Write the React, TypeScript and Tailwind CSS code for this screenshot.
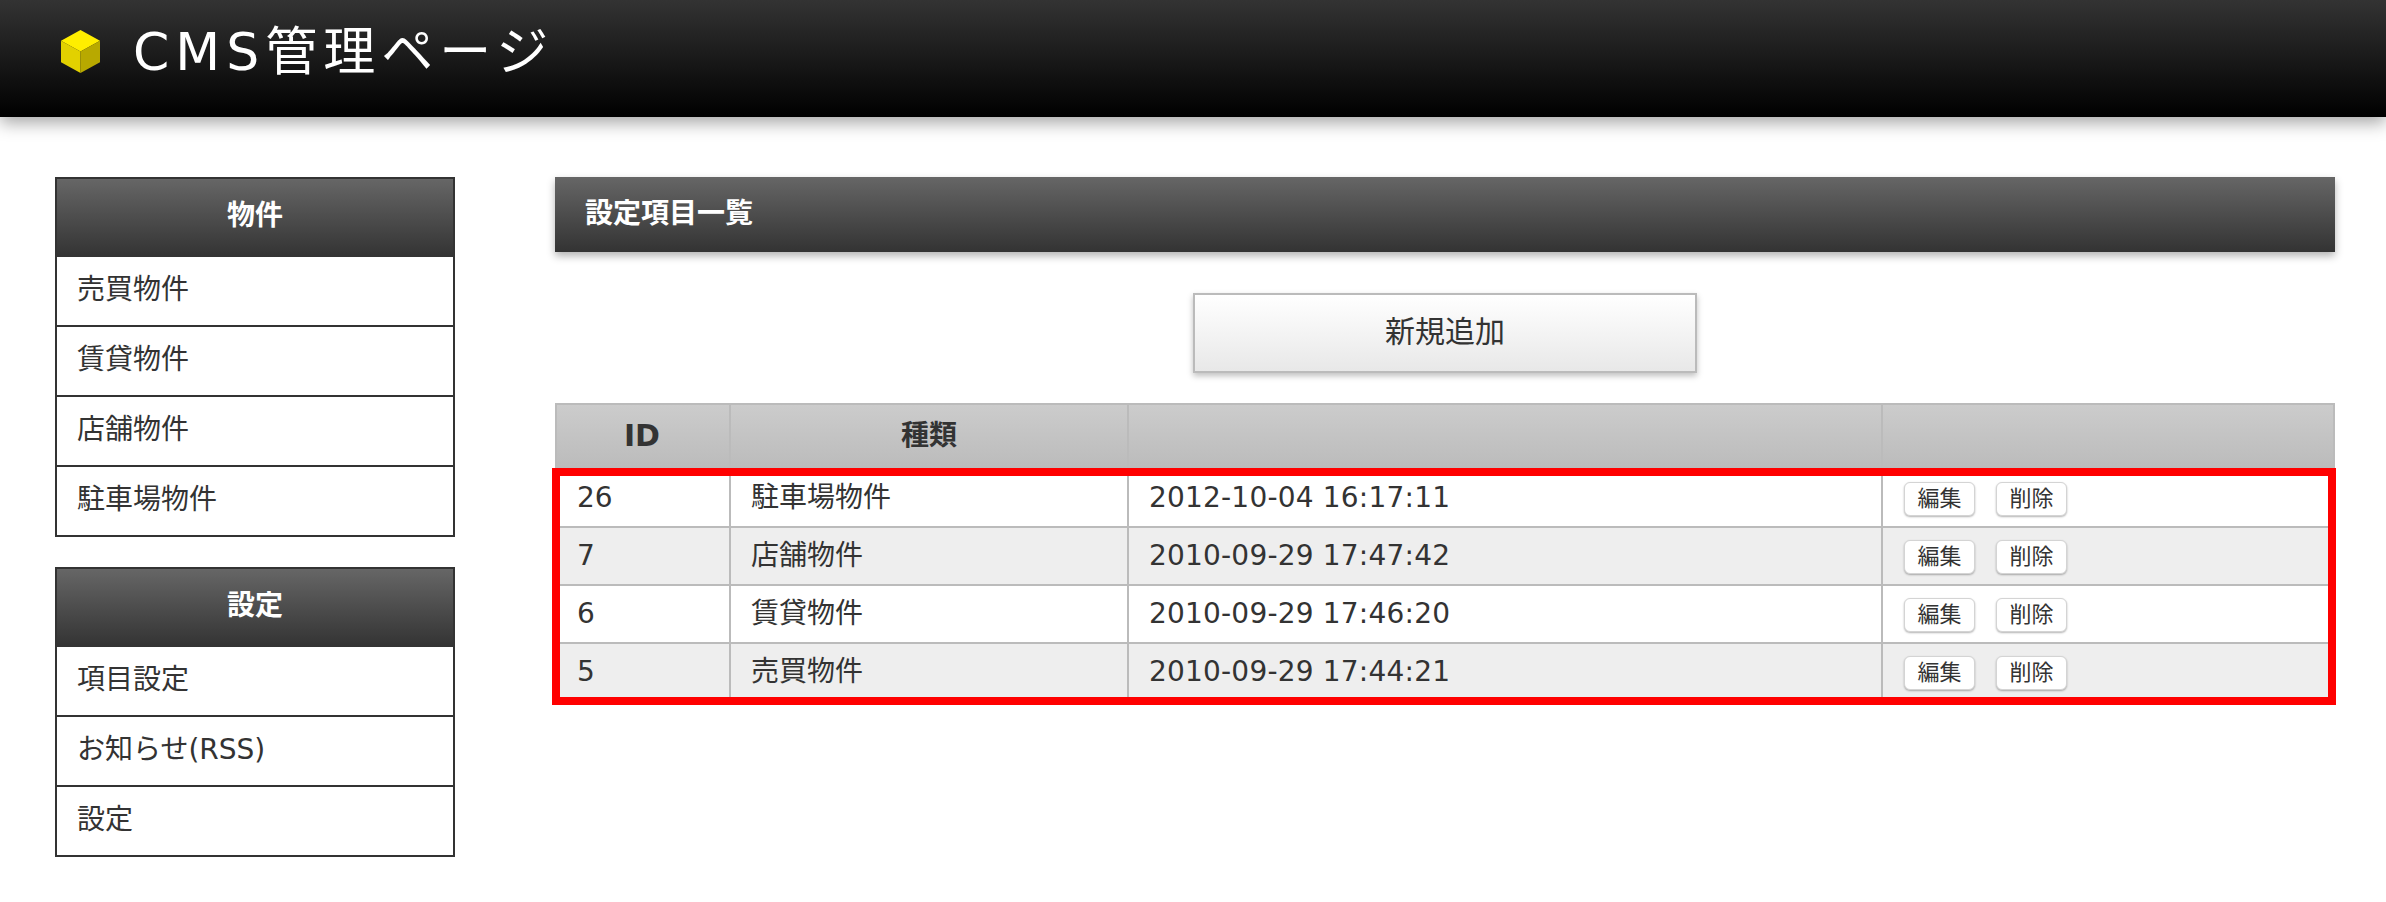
import React from 'react';

const FONT = "font-['DejaVu_Sans','Noto_Sans_CJK_JP',sans-serif]";

const menus = [
  { title: '物件', items: ['売買物件', '賃貸物件', '店舗物件', '駐車場物件'] },
  { title: '設定', items: ['項目設定', 'お知らせ(RSS)', '設定'] },
];

const rows = [
  { id: 26, kind: '駐車場物件', date: '2012-10-04 16:17:11' },
  { id: 7, kind: '店舗物件', date: '2010-09-29 17:47:42' },
  { id: 6, kind: '賃貸物件', date: '2010-09-29 17:46:20' },
  { id: 5, kind: '売買物件', date: '2010-09-29 17:44:21' },
];

const Cube = () => (
  <svg width="39" height="43" viewBox="0 0 40 44" className="blur-[0.5px]">
    <polygon points="20,0 40,11 20,22 0,11" fill="#ffee00" />
    <polygon points="0,11 20,22 20,44 0,33" fill="#e2d100" />
    <polygon points="40,11 20,22 20,44 40,33" fill="#b8a900" />
  </svg>
);

const SmallButton = ({ label }: { label: string }) => (
  <button className="w-[71px] h-[34px] bg-white border border-[#d4d4d4] rounded-[6px] shadow-[0_1px_2px_rgba(0,0,0,0.3)] text-[22px] leading-none text-[#333]">
    {label}
  </button>
);

const App: React.FC = () => {
  return (
    <div className={`w-full min-h-screen bg-white text-[#333] overflow-hidden ${FONT}`}>
      <header className="h-[117px] flex items-center pl-[61px] pb-[14px] bg-linear-to-b/srgb from-[#333333] to-[#000000] shadow-[0_6px_16px_rgba(0,0,0,0.35)]">
        <Cube />
        <h1 className="ml-[33px] text-[52px] leading-none text-white tracking-[6px] font-normal">CMS管理ページ</h1>
      </header>

      <div className="flex items-start pl-[55px] pr-[51px] pt-[60px]">
        <aside className="w-[400px] shrink-0 flex flex-col gap-[30px]">
          {menus.map(menu => (
            <div key={menu.title} className="border-2 border-[#333]">
              <h2 className="h-[78px] flex items-center justify-center pb-[4px] bg-linear-to-b/srgb from-[#666666] to-[#333333] text-white text-[28px] font-bold">
                {menu.title}
              </h2>
              <ul>
                {menu.items.map((item, i) => (
                  <li key={item} className={`flex items-center pl-[20px] text-[28px] ${i > 0 ? 'h-[70px] pb-[3px] border-t-2 border-[#333]' : 'h-[68px] pb-[3px]'}`}>
                    {item}
                  </li>
                ))}
              </ul>
            </div>
          ))}
        </aside>

        <main className="ml-[100px] flex-1 flex flex-col">
          <div className="h-[75px] flex items-center pl-[30px] pb-[2px] bg-linear-to-b/srgb from-[#666666] to-[#333333] text-white text-[28px] font-bold shadow-[0_4px_8px_rgba(0,0,0,0.3)]">
            設定項目一覧
          </div>

          <div className="flex justify-center mt-[41px]">
            <button className="w-[504px] h-[80px] pb-[4px] border-2 border-[#bbb] bg-linear-to-b/srgb from-white to-[#e8e8e8] text-[30px] text-[#333] shadow-[0_3px_6px_rgba(0,0,0,0.25)]">
              新規追加
            </button>
          </div>

          <div className="relative mt-[30px]">
            <table className="w-full border-collapse table-fixed">
              <colgroup>
                <col className="w-[174px]" />
                <col className="w-[398px]" />
                <col className="w-[754px]" />
                <col />
              </colgroup>
              <thead>
                <tr className="h-[65px] bg-linear-to-b/srgb from-[#cccccc] to-[#bbbbbb]">
                  <th className="border-2 border-[#bbb] pb-[2px] pr-[2px] text-[30px] font-bold">ID</th>
                  <th className="border-2 border-[#bbb] pb-[2px] text-[28px] font-bold">種類</th>
                  <th className="border-2 border-[#bbb]"></th>
                  <th className="border-2 border-[#bbb]"></th>
                </tr>
              </thead>
              <tbody>
                {rows.map((row, i) => (
                  <tr key={row.id} className={`h-[58px] ${i % 2 === 1 ? 'bg-[#eeeeee]' : 'bg-white'}`}>
                    <td className="border-2 border-[#bbb] pl-[20px] text-[28px]">{row.id}</td>
                    <td className="border-2 border-[#bbb] pl-[20px] text-[28px]">{row.kind}</td>
                    <td className="border-2 border-[#bbb] pl-[20px] text-[28px] tracking-[0.2px]">{row.date}</td>
                    <td className="border-2 border-[#bbb] pl-[21px] pt-[2px]">
                      <div className="flex gap-[21px]">
                        <SmallButton label="編集" />
                        <SmallButton label="削除" />
                      </div>
                    </td>
                  </tr>
                ))}
              </tbody>
            </table>
            {/* red highlight drawn over the data rows */}
            <div className="absolute left-[-3px] right-[-1px] top-[65px] h-[237px] border-[8px] border-[#ff0000] pointer-events-none"></div>
          </div>
        </main>
      </div>
    </div>
  );
};

export default App;
